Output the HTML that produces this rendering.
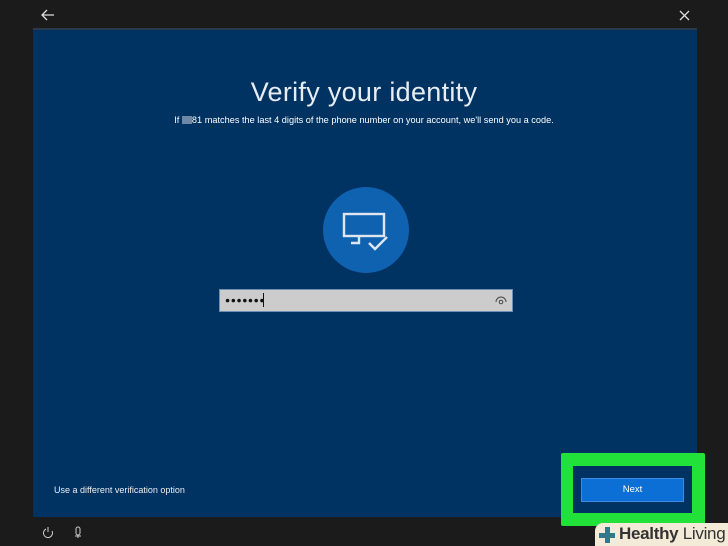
<!DOCTYPE html>
<html><head><meta charset="utf-8"><style>
*{margin:0;padding:0;box-sizing:border-box}
body{width:728px;height:546px;background:#1b1b1b;position:relative;overflow:hidden;font-family:"Liberation Sans",sans-serif;color:#fff}
.panel{position:absolute;left:33px;top:28px;width:664px;height:489px;background:#003262;border-top:2px solid #2a3a4a}
.t{position:absolute;left:0;width:728px;text-align:center}
</style></head><body>
<svg style="position:absolute;left:40px;top:8px" width="16" height="14"><path d="M14 7H2M7 2L2 7l5 5" stroke="#ddd" stroke-width="1.3" fill="none"/></svg>
<svg style="position:absolute;left:679px;top:10px" width="11" height="11"><path d="M1 1l9 9M10 1l-9 9" stroke="#ddd" stroke-width="1.3"/></svg>
<div class="panel"></div>
<div class="t" style="top:77px;font-size:27px;color:#e8edf3;letter-spacing:0.3px">Verify your identity</div>
<div class="t" style="top:115px;font-size:9.2px;color:#fff">If <span style="display:inline-block;width:10px;height:8px;background:#6d87a5;vertical-align:-1px"></span>81 matches the last 4 digits of the phone number on your account, we'll send you a code.</div>
<div style="position:absolute;left:323px;top:187px;width:86px;height:86px;border-radius:50%;background:#0f62b0"></div>
<svg style="position:absolute;left:340px;top:210px" width="52" height="42"><rect x="4" y="4" width="40" height="22" fill="none" stroke="#dfe6ef" stroke-width="2.4"/><path d="M19 26v7h-8" stroke="#dfe6ef" stroke-width="2.4" fill="none"/><path d="M29 33l6 6 12-12" stroke="#dfe6ef" stroke-width="2.4" fill="none"/></svg>
<div style="position:absolute;left:219px;top:289px;width:294px;height:23px;background:#ccc;border:1px solid #6d8fb5"></div>
<div style="position:absolute;left:225px;top:295px;font-size:8.5px;color:#111;letter-spacing:0.6px">●●●●●●●</div>
<div style="position:absolute;left:263px;top:293px;width:1px;height:14px;background:#111"></div>
<svg style="position:absolute;left:495px;top:294px" width="12" height="12"><path d="M1 8a5 5 0 0 1 10 0" stroke="#444" fill="none"/><circle cx="6" cy="8" r="1.8" stroke="#444" fill="none"/></svg>
<div style="position:absolute;left:54px;top:485px;font-size:9px;color:#eee">Use a different verification option</div>
<div style="position:absolute;left:561px;top:453px;width:144px;height:73px;background:#22e23a;border-radius:2px"></div>
<div style="position:absolute;left:573px;top:466px;width:119px;height:47px;background:#003262"></div>
<div style="position:absolute;left:581px;top:478px;width:103px;height:24px;background:#0b6fd6;border:1px solid #3b8be0;font-size:9.5px;text-align:center;line-height:22px">Next</div>
<svg style="position:absolute;left:42px;top:526px" width="12" height="12"><path d="M4 3a4.5 4.5 0 1 0 6 2" stroke="#ccc" fill="none"/><path d="M6 1v5" stroke="#ccc"/></svg>
<svg style="position:absolute;left:73px;top:526px" width="12" height="13"><rect x="3" y="1" width="4" height="8" rx="2" stroke="#ccc" fill="none"/><path d="M2 10h6M5 9v3" stroke="#ccc"/></svg>
<div style="position:absolute;left:595px;top:523px;width:133px;height:23px;background:#f3ead7;border-radius:8px 0 0 0"></div>
<div style="position:absolute;left:599px;top:527px;width:16px;height:16px"><div style="position:absolute;left:6px;top:0;width:5px;height:16px;background:#2d7a8a"></div><div style="position:absolute;left:0;top:6px;width:16px;height:5px;background:#2d7a8a"></div></div>
<div style="position:absolute;left:619px;top:524px;font-size:17px;color:#333;white-space:nowrap;letter-spacing:-0.3px"><b>Healthy</b> Living</div>
</body></html>
